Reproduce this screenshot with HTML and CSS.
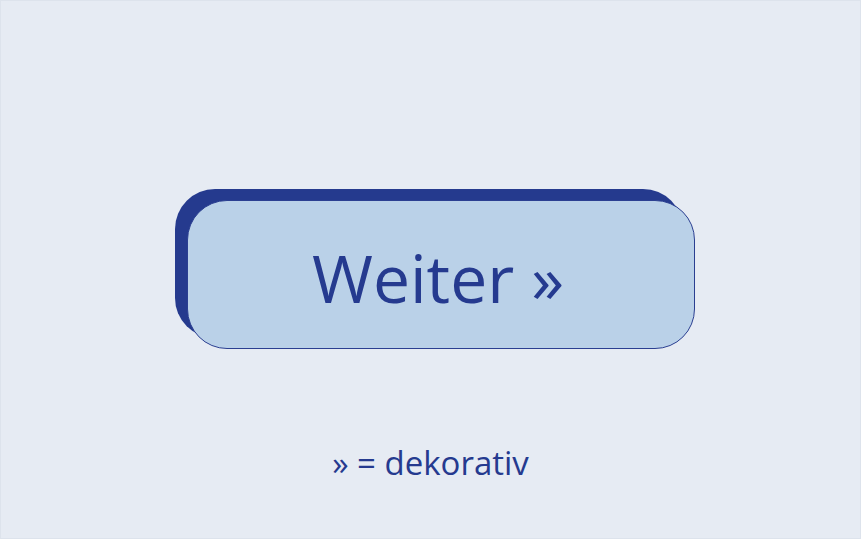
FILE: index.html
```html
<!DOCTYPE html>
<html lang="de">
<head>
    <meta charset="utf-8">
    <title>Weiter</title>
    <link rel="stylesheet" href="styles.css">
</head>
<body>
    <div class="page">
        <button class="next-btn" type="button">Weiter <span aria-hidden="true">»</span></button>
        <p class="note">» = dekorativ</p>
    </div>
</body>
</html>
```

FILE: styles.css
```css
body {
    margin: 0;
    background-color: #e6ebf3;
    font-family: "Open Sans", "Noto Sans", sans-serif;
    color: #253a8f;
}

.page {
    height: 539px;
    box-sizing: border-box;
    border: 1px solid #dde3ec;
    display: flex;
    flex-direction: column;
    align-items: center;
    padding-top: 199px;
}

.next-btn {
    width: 508px;
    height: 149px;
    margin-left: 21px;
    box-sizing: border-box;
    border: 1px solid #2b3f91;
    border-radius: 40px;
    background-color: #bad1e8;
    box-shadow: -12px -11px 0 #253a8e;
    color: #253a8f;
    font-family: inherit;
    font-size: 66px;
    line-height: 1;
    padding: 5px 6px 0 0;
    cursor: pointer;
}

.note {
    margin: 97px 0 0;
    font-size: 33px;
    line-height: 1;
}
```
